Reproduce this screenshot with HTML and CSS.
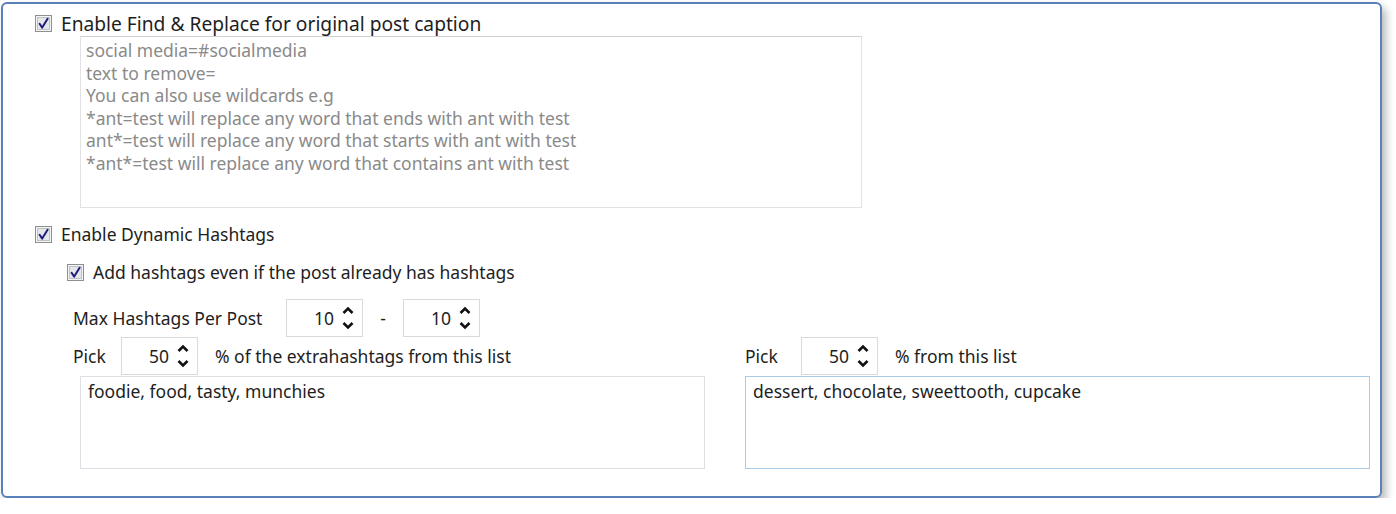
FILE: index.html
```html
<!DOCTYPE html>
<html>
<head>
<meta charset="utf-8">
<link rel="stylesheet" href="styles.css">
</head>
<body>
<div class="panel">
  <label class="check-row row-title">
    <svg class="cb" width="17" height="17" viewBox="0 0 17 17"><rect x="0.5" y="0.5" width="16" height="16" fill="#f4f4f4" stroke="#8e8f8f"/><rect x="2.5" y="2.5" width="12" height="12" fill="#e4e6ea" stroke="#bfc3c9"/><path d="M4.6 8.8 L7.2 12.6 L12.6 3.8" fill="none" stroke="#1f1f7a" stroke-width="2" stroke-linecap="round" stroke-linejoin="round"/></svg>
    <span>Enable Find &amp; Replace for original post caption</span>
  </label>
  <textarea class="ta ta-replace" readonly>social media=#socialmedia
text to remove=
You can also use wildcards e.g
*ant=test will replace any word that ends with ant with test
ant*=test will replace any word that starts with ant with test
*ant*=test will replace any word that contains ant with test</textarea>

  <label class="check-row row-dyn">
    <svg class="cb" width="17" height="17" viewBox="0 0 17 17"><rect x="0.5" y="0.5" width="16" height="16" fill="#f4f4f4" stroke="#8e8f8f"/><rect x="2.5" y="2.5" width="12" height="12" fill="#e4e6ea" stroke="#bfc3c9"/><path d="M4.6 8.8 L7.2 12.6 L12.6 3.8" fill="none" stroke="#1f1f7a" stroke-width="2" stroke-linecap="round" stroke-linejoin="round"/></svg>
    <span>Enable Dynamic Hashtags</span>
  </label>
  <label class="check-row row-add">
    <svg class="cb" width="17" height="17" viewBox="0 0 17 17"><rect x="0.5" y="0.5" width="16" height="16" fill="#f4f4f4" stroke="#8e8f8f"/><rect x="2.5" y="2.5" width="12" height="12" fill="#e4e6ea" stroke="#bfc3c9"/><path d="M4.6 8.8 L7.2 12.6 L12.6 3.8" fill="none" stroke="#1f1f7a" stroke-width="2" stroke-linecap="round" stroke-linejoin="round"/></svg>
    <span>Add hashtags even if the post already has hashtags</span>
  </label>

  <div class="max-row">
    <span class="lbl lbl-max">Max Hashtags Per Post</span>
    <div class="spin"><span class="val">10</span><svg class="arrows" width="12" height="26" viewBox="0 0 12 26"><path d="M1.5 8 L6 3.5 L10.5 8" fill="none" stroke="#111" stroke-width="2.6"/><path d="M1.5 18 L6 22.5 L10.5 18" fill="none" stroke="#111" stroke-width="2.6"/></svg></div>
    <span class="dash">-</span>
    <div class="spin"><span class="val">10</span><svg class="arrows" width="12" height="26" viewBox="0 0 12 26"><path d="M1.5 8 L6 3.5 L10.5 8" fill="none" stroke="#111" stroke-width="2.6"/><path d="M1.5 18 L6 22.5 L10.5 18" fill="none" stroke="#111" stroke-width="2.6"/></svg></div>
  </div>

  <div class="lists">
    <div class="list-col list-left">
      <div class="pick-row">
        <span class="lbl lbl-pick">Pick</span>
        <div class="spin"><span class="val">50</span><svg class="arrows" width="12" height="26" viewBox="0 0 12 26"><path d="M1.5 8 L6 3.5 L10.5 8" fill="none" stroke="#111" stroke-width="2.6"/><path d="M1.5 18 L6 22.5 L10.5 18" fill="none" stroke="#111" stroke-width="2.6"/></svg></div>
        <span class="lbl lbl-pct">% of the extrahashtags from this list</span>
      </div>
      <textarea class="ta ta-list" readonly>foodie, food, tasty, munchies</textarea>
    </div>
    <div class="list-col list-right">
      <div class="pick-row">
        <span class="lbl lbl-pick">Pick</span>
        <div class="spin"><span class="val">50</span><svg class="arrows" width="12" height="26" viewBox="0 0 12 26"><path d="M1.5 8 L6 3.5 L10.5 8" fill="none" stroke="#111" stroke-width="2.6"/><path d="M1.5 18 L6 22.5 L10.5 18" fill="none" stroke="#111" stroke-width="2.6"/></svg></div>
        <span class="lbl lbl-pct">% from this list</span>
      </div>
      <textarea class="ta ta-list ta-focus" readonly>dessert, chocolate, sweettooth, cupcake</textarea>
    </div>
  </div>
</div>
</body>
</html>
```

FILE: styles.css
```css
* { box-sizing: border-box; }
html, body { margin: 0; padding: 0; background: #ffffff; }
body {
  font-family: "Noto Sans", "Open Sans", "Liberation Sans", sans-serif;
  font-size: 17.5px;
  color: #1e1e1e;
}
.panel {
  margin: 2px 0 0 1px;
  width: 1381px;
  height: 496px;
  border: 2px solid #5a80ba;
  border-radius: 6px;
  box-shadow: 4px 5px 9px rgba(0, 0, 0, 0.28);
  padding: 8px 0 0 32px;
  display: flex;
  flex-direction: column;
  align-items: flex-start;
}
.check-row {
  display: flex;
  align-items: center;
  height: 22px;
  gap: 9px;
  white-space: nowrap;
}
.row-title { font-size: 19.2px; }
.cb { flex: none; }
.ta {
  display: block;
  resize: none;
  overflow: hidden;
  font-family: inherit;
  font-size: 17.5px;
  line-height: 22.6px;
  margin: 0;
  outline: none;
  background: #fff;
}
.ta-replace {
  margin: 2px 0 0 45px;
  width: 782px;
  height: 172px;
  border: 1px solid #e0e2e6;
  border-top-color: #cfd1d5;
  color: #8a8a8a;
  padding: 2px 5px;
}
.row-dyn { margin-top: 15px; }
.row-add { margin-top: 16px; margin-left: 32px; }
.max-row {
  display: flex;
  align-items: center;
  margin-top: 16px;
  margin-left: 38px;
  height: 38px;
}
.lbl { white-space: nowrap; }
.lbl-max { width: 213px; }
.dash { width: 40px; text-align: center; }
.spin {
  width: 77px;
  height: 38px;
  border: 1px solid #d7dbe0;
  background: #fff;
  display: flex;
  align-items: center;
  justify-content: flex-end;
  padding-right: 8px;
  gap: 8px;
  flex: none;
}
.val { font-size: 17.5px; }
.arrows { display: block; }
.lists {
  display: flex;
  gap: 40px;
  margin-left: 38px;
  margin-top: -2px;
}
.list-col { display: flex; flex-direction: column; }
.list-left { width: 632px; }
.list-right { width: 625px; }
.pick-row {
  display: flex;
  align-items: center;
  height: 41px;
}
.list-left .pick-row .lbl-pick { width: 48px; }
.list-right .pick-row .lbl-pick { width: 56px; }
.lbl-pct { margin-left: 17px; }
.ta-list {
  width: 625px;
  height: 93px;
  border: 1px solid #dcdfe4;
  color: #1e1e1e;
  padding: 3px 7px;
}
.list-left .ta-list { margin-left: 7px; }
.ta-focus { border-color: #a9cbe6; }
```
